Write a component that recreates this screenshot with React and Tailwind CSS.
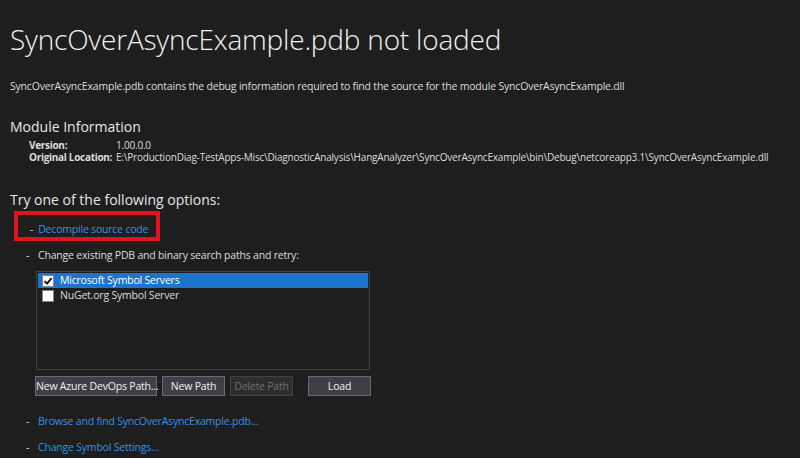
import React from 'react';

const modulo = {
  versao: '1.00.0.0',
  local: 'E:\\ProductionDiag-TestApps-Misc\\DiagnosticAnalysis\\HangAnalyzer\\SyncOverAsyncExample\\bin\\Debug\\netcoreapp3.1\\SyncOverAsyncExample.dll'
};

const servidores = [
  { nome: 'Microsoft Symbol Servers', marcado: true },
  { nome: 'NuGet.org Symbol Server', marcado: false }
];

function Caixa({ marcado }) {
  return (
    <span className="w-[12px] h-[12px] bg-white border border-[#888] flex items-center justify-center shrink-0">
      {marcado && (
        <svg width="10" height="10" viewBox="0 0 10 10">
          <path d="M1.5 5.2 L4 7.7 L8.6 2.2" fill="none" stroke="#111" strokeWidth="1.8" />
        </svg>
      )}
    </span>
  );
}

function Botao({ children, largura, desativado }) {
  return (
    <button
      className={
        'h-[20px] border text-[10.5px] leading-none whitespace-nowrap tracking-[-0.2px] ' +
        largura +
        (desativado
          ? ' bg-[#2d2d30] border-[#434346] text-[#6d6d6d]'
          : ' bg-[#3f3f46] border-[#6a6a70] text-[#f1f1f1]')
      }
    >
      {children}
    </button>
  );
}

export default function App() {
  return (
    <div
      className="w-[800px] h-[458px] overflow-hidden bg-[#1e1e1e] text-[#dcdcdc] pl-[10px]"
      style={{ fontFamily: '"Open Sans", "Noto Sans", sans-serif' }}
    >
      <h1 className="pt-[21px] text-[28px] leading-[36px] font-light text-[#f1f1f1] tracking-[-0.2px]">
        SyncOverAsyncExample.pdb not loaded
      </h1>

      <p className="mt-[22px] text-[10.5px] leading-[14px] tracking-[-0.2px] whitespace-nowrap">
        SyncOverAsyncExample.pdb contains the debug information required to find the source for the module SyncOverAsyncExample.dll
      </p>

      <h2 className="mt-[24px] text-[14px] leading-[20px] text-[#e6e6e6]">Module Information</h2>
      <div className="mt-[2px] pl-[19px] text-[10px] leading-[12px] whitespace-nowrap">
        <div className="flex h-[12px]">
          <span className="w-[87px] shrink-0 font-bold tracking-[-0.3px]">Version:</span>
          <span className="tracking-[-0.2px]">{modulo.versao}</span>
        </div>
        <div className="flex h-[12px]">
          <span className="w-[87px] shrink-0 font-bold tracking-[-0.3px]">Original Location:</span>
          <span className="tracking-[-0.2px]">{modulo.local}</span>
        </div>
      </div>

      <h2 className="mt-[27px] text-[14px] leading-[20px] text-[#e6e6e6]">
        Try one of the following options:
      </h2>

      <div className="ml-[4px] mt-[1px] w-[146px] h-[30px] border-[4px] border-[#e3121e] flex items-start pl-[12px] pt-[6px] leading-[16px] text-[10.5px] tracking-[-0.2px]">
        <span className="mr-[5px]">-</span>
        <a className="text-[#3592e6]">Decompile source code</a>
      </div>

      <div className="pl-[16px] mt-[6px] text-[10.5px] tracking-[-0.2px] whitespace-nowrap">
        <div className="flex leading-[16px]">
          <span className="w-[12px]">-</span>
          <span>Change existing PDB and binary search paths and retry:</span>
        </div>

        <div className="ml-[10px] mt-[8px] w-[334px] h-[99px] border border-[#434346] bg-[#1e1e1e] p-[1px]">
          {servidores.map(s => (
            <div
              key={s.nome}
              className={'flex items-center gap-[6px] h-[15px] pl-[4px] ' + (s.marcado ? 'bg-[#1c74cc] text-white' : '')}
            >
              <Caixa marcado={s.marcado} />
              <span>{s.nome}</span>
            </div>
          ))}
        </div>

        <div className="ml-[9px] mt-[6px] flex">
          <Botao largura="w-[122px]">New Azure DevOps Path...</Botao>
          <span className="w-[5px]" />
          <Botao largura="w-[63px]">New Path</Botao>
          <span className="w-[5px]" />
          <Botao largura="w-[63px]" desativado>Delete Path</Botao>
          <span className="w-[15px]" />
          <Botao largura="w-[63px]">Load</Botao>
        </div>

        <div className="flex mt-[17px] leading-[16px]">
          <span className="w-[12px]">-</span>
          <a className="text-[#3592e6]">Browse and find SyncOverAsyncExample.pdb...</a>
        </div>
        <div className="flex mt-[10px] leading-[16px]">
          <span className="w-[12px]">-</span>
          <a className="text-[#3592e6]">Change Symbol Settings...</a>
        </div>
      </div>
    </div>
  );
}
